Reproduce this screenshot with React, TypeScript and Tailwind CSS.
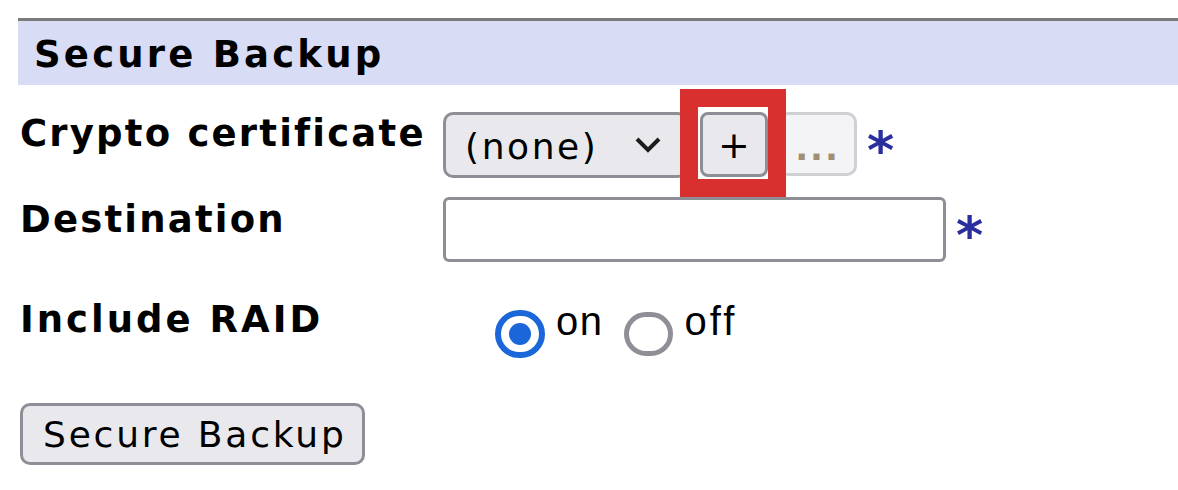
import React from "react";

const label = "font-['DejaVu_Sans',Verdana,sans-serif] font-bold text-[37px] leading-[44px] tracking-[2.2px] text-black";
const plain = "font-['DejaVu_Sans',Verdana,sans-serif] text-[36px] text-black";

const Star = ({ className }: { className: string }) => (
  <span className={`font-['DejaVu_Sans',sans-serif] font-bold text-[52px] leading-none text-[#2b2f9e] ${className}`}>*</span>
);

export default function App() {
  return (
    <div className="w-[1178px] h-[490px] bg-white overflow-hidden pl-[18px] pt-[18px]">
      {/* section header */}
      <div className="h-[67px] border-t-[3px] border-[#7b7b7b] bg-[#d9dcf5] pl-[16px] pt-[12px]">
        <h2 className={`${label} tracking-[3.2px]`}>Secure Backup</h2>
      </div>

      <div className="pl-[2px] pt-[27px]">
        {/* crypto certificate */}
        <div className="flex items-start h-[66px]">
          <div className={`${label} w-[423px] shrink-0`}>Crypto certificate</div>
          <div className="relative flex items-start">
            <div className="w-[245px] h-[66px] rounded-[10px] border-[3px] border-[#8e8e96] bg-[#e9e9ed] flex items-center pl-[19px] pr-[24px]">
              <span className={`${plain} tracking-[2.6px] leading-none pt-[4px]`}>(none)</span>
              <svg className="ml-auto" width="26" height="16" viewBox="0 0 26 16" fill="none">
                <path d="M2 2 L13 13 L24 2" stroke="#1c1c1c" strokeWidth="4" />
              </svg>
            </div>
            <div className="ml-[12px] w-[68px] h-[65px] rounded-[8px] border-[3px] border-[#8e8e96] bg-[#e9e9ed] flex items-center justify-center">
              <span className="font-['DejaVu_Sans',sans-serif] text-[38px] leading-none text-black">+</span>
            </div>
            <div className="ml-[10px] w-[79px] h-[64px] rounded-[10px] border-[3px] border-[#cfcfd4] bg-[#f4f4f6] flex items-end justify-center pb-[8px]">
              <span className="font-['DejaVu_Sans',sans-serif] font-bold text-[34px] leading-none tracking-[2px] text-[#a08f72]">...</span>
            </div>
            <Star className="ml-[10px] mt-[12px]" />
            {/* highlight box */}
            <div className="absolute left-[237px] top-[-23px] w-[106px] h-[108px] border-[18px] border-[#d8302f]" />
          </div>
        </div>

        {/* destination */}
        <div className="flex items-start h-[65px] mt-[19px]">
          <div className={`${label} w-[423px] shrink-0 pt-[1px]`}>Destination</div>
          <div className="w-[503px] h-[65px] rounded-[6px] border-[3px] border-[#8e8e96] bg-white" />
          <Star className="ml-[10px] mt-[12px]" />
        </div>

        {/* include raid */}
        <div className="flex items-start h-[60px] mt-[36px]">
          <div className={`${label} w-[423px] shrink-0 tracking-[3px]`}>Include RAID</div>
          <div className="ml-[52px] mt-[12px] w-[50px] h-[48px] rounded-full border-[6px] border-[#1b66d8] bg-white flex items-center justify-center">
            <div className="w-[22px] h-[22px] rounded-full bg-[#1b66d8]" />
          </div>
          <span className="ml-[11px] mt-[2px] font-['Liberation_Sans',Arial,sans-serif] text-[40px] leading-[42px] tracking-[1.5px] text-black">on</span>
          <div className="ml-[20px] mt-[14px] w-[49px] h-[44px] rounded-full border-[5px] border-[#8f8f97] bg-white" />
          <span className="ml-[12px] mt-[2px] font-['Liberation_Sans',Arial,sans-serif] text-[40px] leading-[42px] tracking-[3px] text-black">off</span>
        </div>

        {/* submit */}
        <div className="mt-[45px]">
          <button className="w-[345px] h-[62px] rounded-[10px] border-[3px] border-[#8e8e96] bg-[#e9e9ed] flex items-center pl-[20px]">
            <span className={`${plain} tracking-[2.8px] leading-none pt-[2px]`}>Secure Backup</span>
          </button>
        </div>
      </div>
    </div>
  );
}
